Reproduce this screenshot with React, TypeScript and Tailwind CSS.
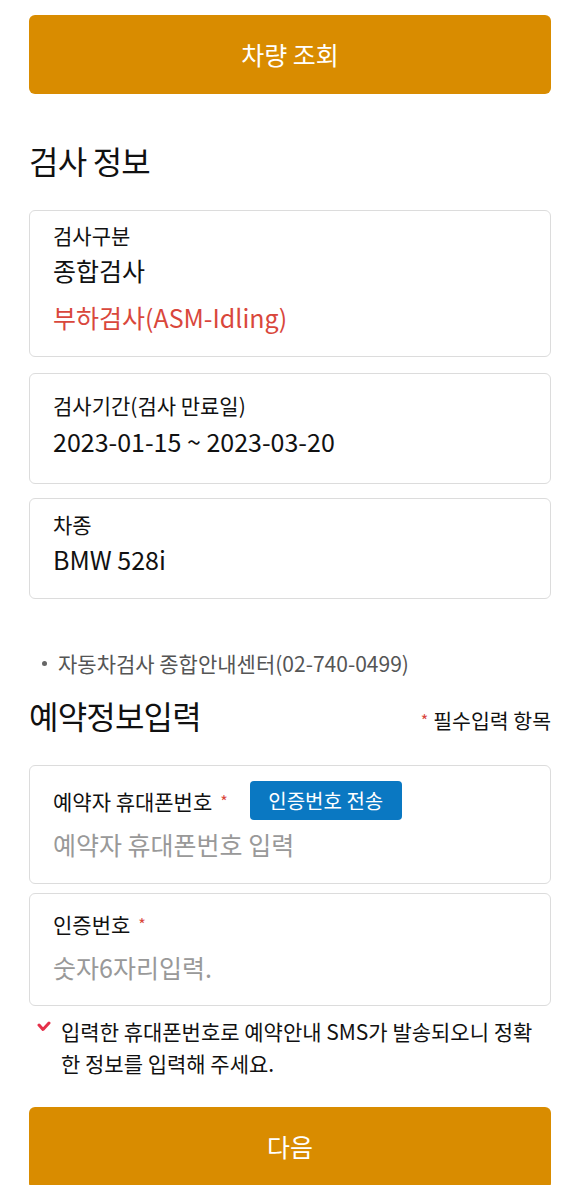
import React from "react";

const font = { fontFamily: '"Noto Sans CJK KR", "Noto Sans", sans-serif' };

function Card({ children, className }: { children: React.ReactNode; className?: string }) {
  return (
    <div className={`rounded-[6px] border border-[#dcdcdc] bg-white px-[23px] ${className ?? ""}`}>
      {children}
    </div>
  );
}

export default function App() {
  return (
    <div className="w-[580px] bg-white text-[#111] overflow-hidden h-[1185px]" style={font}>
      <div className="px-[29px] pt-[15px]">
        <button className="w-full h-[79px] rounded-[6px] bg-[#d98c00] text-white text-[25px] leading-none">
          차량 조회
        </button>

        <h2 className="mt-[48px] text-[32px] leading-[36px] font-normal tracking-[-0.8px]">검사 정보</h2>

        <Card className="mt-[32px] h-[147px] pt-[12px]">
          <div className="text-[21px] leading-[24px]">검사구분</div>
          <div className="mt-[9px] text-[25px] leading-[28px]">종합검사</div>
          <div className="mt-[19px] text-[25px] leading-[28px] text-[#d9473c]">부하검사(ASM-Idling)</div>
        </Card>

        <Card className="mt-[16px] h-[111px] pt-[19px]">
          <div className="text-[21px] leading-[24px]">검사기간(검사 만료일)</div>
          <div className="mt-[10px] text-[25px] leading-[28px]">2023-01-15 ~ 2023-03-20</div>
        </Card>

        <Card className="mt-[14px] h-[101px] pt-[13px]">
          <div className="text-[21px] leading-[24px]">차종</div>
          <div className="mt-[9px] text-[25px] leading-[28px]">BMW 528i</div>
        </Card>

        <div className="mt-[52px] flex items-center pl-[13px] text-[21px] leading-[24px] text-[#555]">
          <span className="w-[5px] h-[5px] rounded-full bg-[#666] mr-[11px]" />
          자동차검사 종합안내센터(02-740-0499)
        </div>

        <div className="mt-[22px] flex items-end justify-between">
          <h2 className="text-[32px] leading-[36px] font-normal tracking-[-0.8px]">예약정보입력</h2>
          <div className="text-[20.5px] leading-[24px] pb-[1px]">
            <span className="text-[#d9473c] text-[16px] mr-[5px] align-top">*</span>필수입력 항목
          </div>
        </div>

        <Card className="mt-[32px] h-[119px] pt-[15px]">
          <div className="flex items-center">
            <span className="text-[21px] leading-[24px]">예약자 휴대폰번호</span>
            <span className="text-[#d9473c] text-[16px] ml-[8px]">*</span>
            <span className="ml-[22px] h-[39px] w-[152px] rounded-[4px] bg-[#0a78c2] text-white text-[20px] flex items-center justify-center">
              인증번호 전송
            </span>
          </div>
          <div className="mt-[10px] text-[25px] leading-[28px] text-[#999]">예약자 휴대폰번호 입력</div>
        </Card>

        <Card className="mt-[9px] h-[113px] pt-[18px]">
          <div className="flex items-center">
            <span className="text-[21px] leading-[24px]">인증번호</span>
            <span className="text-[#d9473c] text-[16px] ml-[8px]">*</span>
          </div>
          <div className="mt-[17px] text-[25px] leading-[28px] text-[#999]">숫자6자리입력.</div>
        </Card>

        <div className="mt-[9px] flex pl-[8px]">
          <svg width="14" height="12" viewBox="0 0 14 12" className="mt-[6px] mr-[10px] shrink-0">
            <path d="M2 4 L6 8.5 L12 2" fill="none" stroke="#e5304a" strokeWidth="3" strokeLinecap="round" strokeLinejoin="round" />
          </svg>
          <p className="text-[21px] leading-[32px] text-[#111] break-all">
            입력한 휴대폰번호로 예약안내 SMS가 발송되오니 정확한 정보를 입력해 주세요.
          </p>
        </div>

        <button className="mt-[28px] w-full h-[82px] rounded-[6px] bg-[#d98c00] text-white text-[25px] leading-none pb-[4px]">
          다음
        </button>
      </div>
    </div>
  );
}
